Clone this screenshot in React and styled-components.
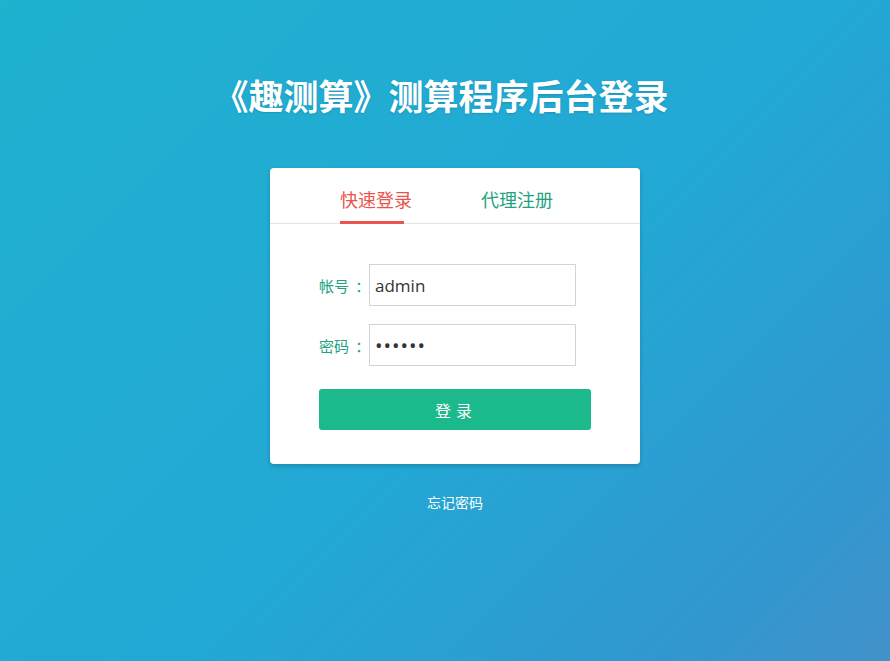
import { useState } from "react";
import styled, { createGlobalStyle } from "styled-components";

const GlobalStyle = createGlobalStyle`
  html, body {
    margin: 0;
    padding: 0;
    height: 100%;
  }
  body {
    font-family: "Microsoft YaHei", "Noto Sans CJK SC", "Liberation Sans", sans-serif;
  }
  #root {
    min-height: 100%;
  }
`;

const Page = styled.div`
  width: 100%;
  height: 661px;
  overflow: hidden;
  background: linear-gradient(135deg, #20b1cf 0%, #22a8d5 55%, #3197d0 85%, #4292c9 100%);
  display: flex;
  flex-direction: column;
  align-items: center;
`;

const Title = styled.h1`
  margin: 74px 0 0;
  padding-right: 8px;
  font-size: 35px;
  line-height: 42px;
  font-weight: 700;
  color: #fff;
  text-shadow: 0 1px 2px rgba(0, 0, 0, 0.15);
`;

const Body = styled.div`
  margin-top: 52px;
  padding-left: 20px;
  display: flex;
  flex-direction: column;
  align-items: center;
`;

const Card = styled.div`
  width: 370px;
  height: 296px;
  background: #fff;
  border-radius: 4px;
  box-shadow: 0 2px 4px rgba(0, 0, 0, 0.18);
  box-sizing: border-box;
`;

const Tabs = styled.div`
  height: 55px;
  display: flex;
  padding-left: 70px;
  gap: 69px;
  border-bottom: 1px solid #e3e3e3;
`;

const Tab = styled.div`
  position: relative;
  padding-top: 19px;
  font-size: 18px;
  line-height: 24px;
  color: ${p => (p.$active ? "#e9544c" : "#22a37f")};
  cursor: pointer;

  &::after {
    content: "";
    display: ${p => (p.$active ? "block" : "none")};
    position: absolute;
    left: 0;
    bottom: -1px;
    width: 64px;
    height: 3px;
    background: #e9544c;
  }
`;

const Form = styled.form`
  padding: 40px 48px 0 49px;
  display: flex;
  flex-direction: column;
`;

const Row = styled.div`
  display: flex;
  align-items: center;
  margin-bottom: 18px;
`;

const Label = styled.label`
  width: 50px;
  font-size: 15px;
  color: #22a37f;
  white-space: pre;
  word-spacing: 3px;
`;

const Input = styled.input`
  width: 207px;
  height: 42px;
  box-sizing: border-box;
  border: 1px solid #d4d4d4;
  padding: 0 5px;
  font-size: ${p => (p.type === "password" ? "20px" : "17px")};
  font-family: "Open Sans", "Liberation Sans", sans-serif;
  color: #333;
  outline: none;
  letter-spacing: ${p => (p.type === "password" ? "1px" : "0")};
`;

const Submit = styled.button`
  margin-top: 5px;
  width: 272px;
  height: 41px;
  border: none;
  border-radius: 3px;
  background: #1bb98c;
  color: #fff;
  font-size: 16px;
  letter-spacing: 5px;
  padding-left: 8px;
  font-family: inherit;
  cursor: pointer;
`;

const Forgot = styled.a`
  margin-top: 28px;
  font-size: 14px;
  color: #fff;
  text-decoration: none;
  cursor: pointer;
`;

export default function App() {
  const [tab, setTab] = useState(0);
  const [user, setUser] = useState("admin");
  const [pwd, setPwd] = useState("123456");

  return (
    <>
      <GlobalStyle />
      <Page>
        <Title>《趣测算》测算程序后台登录</Title>
        <Body>
          <Card>
            <Tabs>
              <Tab $active={tab === 0} onClick={() => setTab(0)}>
                快速登录
              </Tab>
              <Tab $active={tab === 1} onClick={() => setTab(1)}>
                代理注册
              </Tab>
            </Tabs>
            <Form onSubmit={e => e.preventDefault()}>
              <Row>
                <Label>帐号 ：</Label>
                <Input value={user} onChange={e => setUser(e.target.value)} />
              </Row>
              <Row>
                <Label>密码 ：</Label>
                <Input type='password' value={pwd} onChange={e => setPwd(e.target.value)} />
              </Row>
              <Submit type='submit'>登录</Submit>
            </Form>
          </Card>
          <Forgot>忘记密码</Forgot>
        </Body>
      </Page>
    </>
  );
}
